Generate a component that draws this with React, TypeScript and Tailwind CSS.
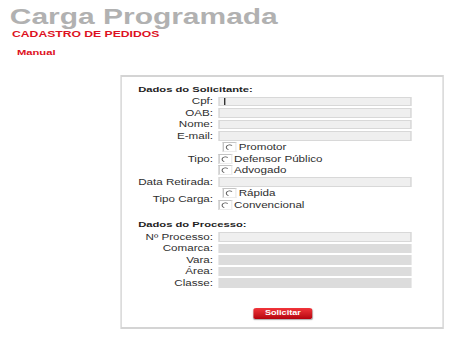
import React from "react";

// Campo de texto do formulário (os desabilitados ficam mais escuros)
function Campo({ disabled = false, cursor = false }: { disabled?: boolean; cursor?: boolean }) {
  return (
    <div className="flex h-full items-center">
      <div
        className={
          disabled
            ? "flex h-[9.5px] w-full items-center bg-[#dcdcdc]"
            : "flex h-[9.5px] w-full items-center border border-[#d8d8d8] bg-[#efefef]"
        }
      >
        {cursor && <span className="ml-[2.8px] h-[7px] w-px bg-[#333]" />}
      </div>
    </div>
  );
}

function Radio({ label, indent = false }: { label: string; indent?: boolean }) {
  return (
    <div className="col-start-2 flex h-full items-center">
      <span
        className={
          (indent ? "ml-[3.3px] " : "") +
          "flex h-[10px] w-[10px] items-center justify-center border-t border-l border-r border-b border-t-[#c4c4c4] border-l-[#c4c4c4] border-r-[#ececec] border-b-[#ececec] bg-white"
        }
      >
        <svg width="10" height="10" viewBox="0 0 10 10">
          <path d="M7.2 3.1 A3.1 3.1 0 1 0 4 8.3" fill="none" stroke="#555" strokeWidth="0.9" />
        </svg>
      </span>
      <span className="ml-[1.4px] text-[8.3px] leading-none text-[#2e2e2e]">{label}</span>
    </div>
  );
}

function Rotulo({ children, span }: { children: React.ReactNode; span?: 2 | 3 }) {
  return (
    <div
      className={
        (span === 3 ? "row-span-3 " : span === 2 ? "row-span-2 " : "") +
        "col-start-1 flex h-full items-center justify-end text-[8.3px] leading-none text-[#2e2e2e]"
      }
    >
      {children}
    </div>
  );
}

export default function App() {
  return (
    <div className="min-h-screen bg-white" style={{ fontFamily: '"Liberation Sans", Arial, sans-serif' }}>
      <div className="flex w-[326px] origin-top-left scale-x-[1.4] flex-col pt-[6.6px]">
        <h1 className="ml-[7px] h-[20px] text-[21.4px] font-bold leading-[20px] text-[#b1b1b1]">
          Carga Programada
        </h1>
        <h2 className="ml-[8.6px] mt-[2px] h-[10px] text-[8.7px] font-bold leading-[10px] text-[#dd1122]">
          CADASTRO DE PEDIDOS
        </h2>
        <div className="ml-[12.1px] mt-[9.2px] h-[10px] text-[8px] font-bold leading-[10px] text-[#dd1122]">
          Manual
        </div>

        <div className="ml-[85.7px] mt-[16.9px] w-[231px] border-x border-y-2 border-[#d4d4d4] pl-[12px] pt-[8px] pb-[8px]">
          <div className="h-[10px] text-[8px] font-bold leading-[10px] text-[#1e1e1e]">
            Dados do Solicitante:
          </div>
          <div className="mt-[1px] grid auto-rows-[11.5px] grid-cols-[53.5px_138px] gap-x-[3.6px]">
            <Rotulo>Cpf:</Rotulo>
            <Campo cursor />
            <Rotulo>OAB:</Rotulo>
            <Campo />
            <Rotulo>Nome:</Rotulo>
            <Campo />
            <Rotulo>E-mail:</Rotulo>
            <Campo />
            <Rotulo span={3}>Tipo:</Rotulo>
            <Radio label="Promotor" indent />
            <Radio label="Defensor Público" />
            <Radio label="Advogado" />
            <Rotulo>Data Retirada:</Rotulo>
            <Campo />
            <Rotulo span={2}>Tipo Carga:</Rotulo>
            <Radio label="Rápida" indent />
            <Radio label="Convencional" />
          </div>

          <div className="mt-[9.7px] h-[10px] text-[8px] font-bold leading-[10px] text-[#1e1e1e]">
            Dados do Processo:
          </div>
          <div className="mt-[0.8px] grid auto-rows-[11.5px] grid-cols-[53.5px_138px] gap-x-[3.6px]">
            <Rotulo>Nº Processo:</Rotulo>
            <Campo />
            <Rotulo>Comarca:</Rotulo>
            <Campo disabled />
            <Rotulo>Vara:</Rotulo>
            <Campo disabled />
            <Rotulo>Área:</Rotulo>
            <Campo disabled />
            <Rotulo>Classe:</Rotulo>
            <Campo disabled />
          </div>

          <div className="mt-[19px] flex">
            <button className="ml-[82.7px] flex h-[11px] w-[41.4px] items-center justify-center rounded-[2px] bg-gradient-to-b from-[#f2343a] to-[#b5000c] text-[6.5px] font-bold leading-none text-white shadow-[0_1px_1px_rgba(0,0,0,0.35)]">
              Solicitar
            </button>
          </div>
        </div>
      </div>
    </div>
  );
}
